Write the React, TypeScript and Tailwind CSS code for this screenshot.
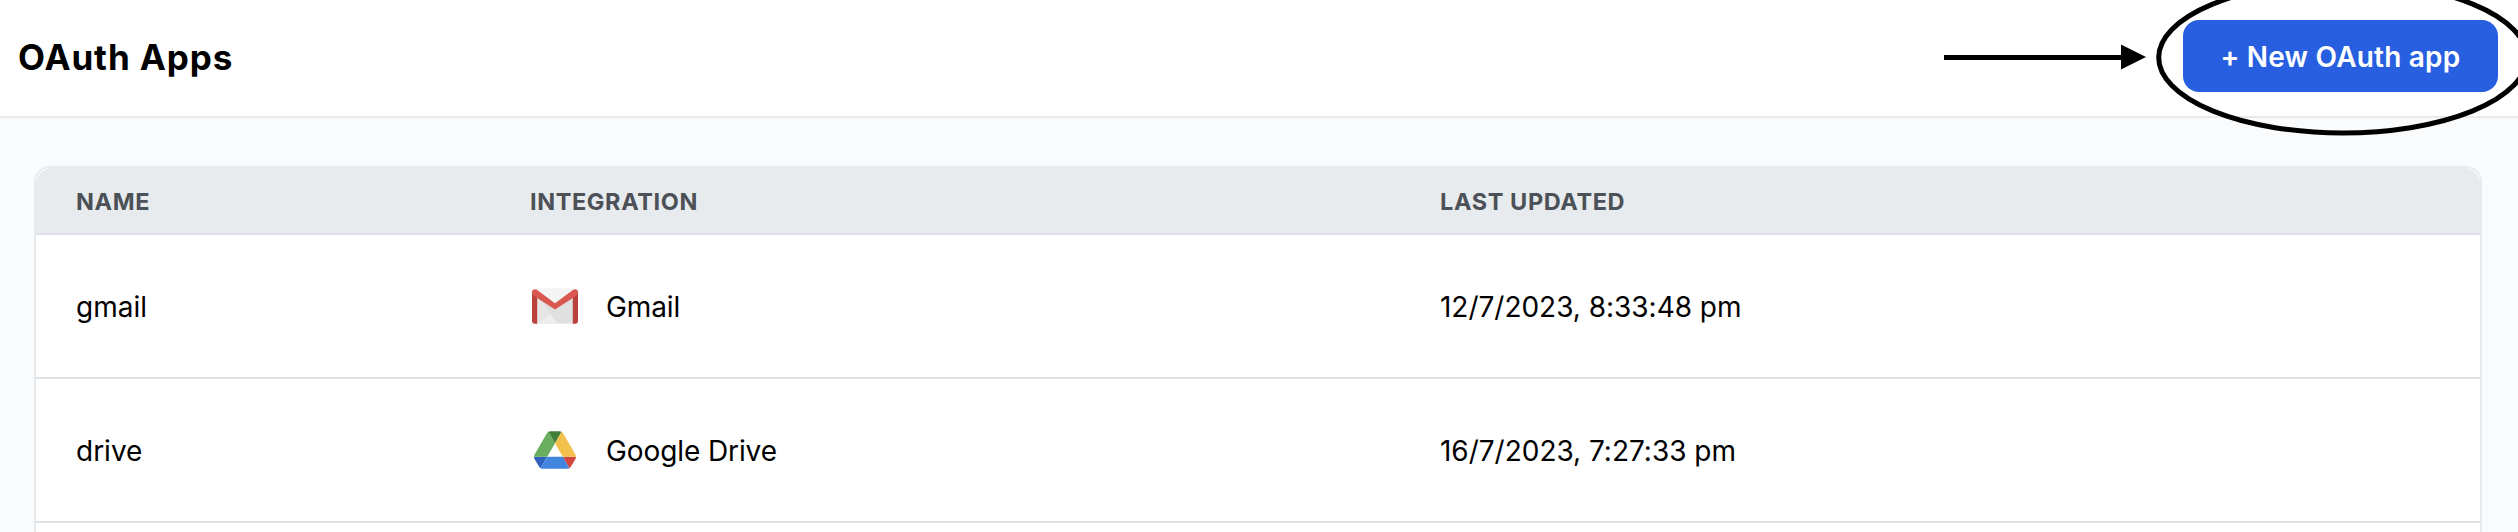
import type { ReactNode } from "react";

function GmailIcon() {
  return (
    <svg width="46" height="36" viewBox="0 0 46 36" className="shrink-0">
      <path d="M3 0.3h40v35.4H3z" fill="#f4f4f4" />
      <path d="M5 7.5 23 20.5 41 7.5v28H5z" fill="#e0e0e0" />
      <path d="M5 7.5 19 25 5 35.5z" fill="#e6e6e6" />
      <path d="M5 35.7 18.5 26 25.5 35.7z" fill="#eeeeee" />
      <path d="M0 4h5.2v31.7H3a3 3 0 0 1-3-3z" fill="#b9423c" />
      <path d="M46 4h-5.2v31.7H43a3 3 0 0 0 3-3z" fill="#b9423c" />
      <path d="M0 4C0 1.2 2.8.4 4.800 1.800L23 15.300 41.200 1.800C43.200.4 46 1.200 46 4c0 1.800-.6 3-2 4L23 21.500 2 8C.6 7 0 5.800 0 4z" fill="#d95850" />
    </svg>
  );
}

function DriveIcon() {
  return (
    <svg width="42" height="38" viewBox="0 0 87.3 78" className="shrink-0">
      <path d="m6.600 66.850 3.850 6.650c.8 1.400 1.950 2.500 3.300 3.300l13.750-23.800h-27.500c0 1.550.4 3.100 1.200 4.500z" fill="#2f63bd" />
      <path d="m43.650 25-13.750-23.800c-1.350.8-2.500 1.900-3.300 3.300l-25.400 44a9.060 9.060 0 0 0-1.200 4.500h27.500z" fill="#68ae5e" />
      <path d="m73.550 76.800c1.350-.8 2.500-1.900 3.300-3.300l1.600-2.750 7.650-13.250c.8-1.400 1.200-2.950 1.200-4.500h-27.500z" fill="#d3483e" />
      <path d="m43.650 25 13.750-23.800c-1.350-.8-2.900-1.200-4.500-1.200h-18.500c-1.600 0-3.150.45-4.500 1.200z" fill="#437f3a" />
      <path d="m59.800 53h-32.300l-13.750 23.800c1.350.8 2.900 1.200 4.500 1.200h50.800c1.600 0 3.150-.45 4.500-1.200z" fill="#4285df" />
      <path d="m73.400 26.500-12.700-22c-.8-1.400-1.950-2.500-3.300-3.300l-13.750 23.800 16.150 28h27.450c0-1.550-.4-3.100-1.200-4.500z" fill="#f2c04c" />
    </svg>
  );
}

type OAuthApp = { name: string; integration: string; icon: ReactNode; updated: string };

const apps: OAuthApp[] = [
  { name: "gmail", integration: "Gmail", icon: <GmailIcon />, updated: "12/7/2023, 8:33:48 pm" },
  { name: "drive", integration: "Google Drive", icon: <DriveIcon />, updated: "16/7/2023, 7:27:33 pm" },
];

export default function App() {
  return (
    <div className="relative flex h-[532px] w-full flex-col overflow-hidden bg-[#fafbfd] font-['Inter',sans-serif] text-black">
      <header className="flex h-[118px] shrink-0 items-center justify-between border-b-2 border-[#e8ebed] bg-white pr-5 pl-[18px]">
        <h1 className="pb-[3px] text-[35px] leading-[48px] font-bold tracking-[0.9px]">OAuth Apps</h1>
        <button className="mb-1 h-[72px] w-[315px] rounded-2xl bg-[#285fe0] pt-[2px] text-[28px] font-semibold tracking-[0.2px] text-white">
          + New OAuth app
        </button>
      </header>

      <main className="flex-1 pt-12 pr-9 pl-[34px]">
        <div className="h-[400px] rounded-t-2xl border-2 border-[#e8ebed] bg-white">
          <div className="grid h-[67px] grid-cols-[454px_910px_1fr] items-center rounded-t-2xl border-b-2 border-[#dee2e6] bg-[#e8ebed] pt-[3px] text-[23.5px] font-bold tracking-[0.6px] text-[#4c5057]">
            <div className="pl-10">NAME</div>
            <div className="pl-10">INTEGRATION</div>
            <div className="pl-10">LAST UPDATED</div>
          </div>
          {apps.map((app) => (
            <div
              key={app.name}
              className="grid h-36 grid-cols-[454px_910px_1fr] items-center border-b-2 border-[#dee2e6] text-[28px]"
            >
              <div className="pt-[2px] pl-10">{app.name}</div>
              <div className="flex items-center pl-10">
                <span className="flex w-[50px] justify-center">{app.icon}</span>
                <span className="pt-[2px] pl-[26px] tracking-[-0.1px]">{app.integration}</span>
              </div>
              <div className="pt-[2px] pl-10 tracking-[-0.02px]">{app.updated}</div>
            </div>
          ))}
        </div>
      </main>

      <svg width="574" height="140" viewBox="0 0 574 140" className="pointer-events-none absolute top-0 right-0">
        <path d="M0 57.500h178" stroke="#000" strokeWidth="5" />
        <path d="M177 44.500 202 57 177 69.500z" fill="#000" />
        <ellipse cx="398.700" cy="57.500" rx="184" ry="75.500" fill="none" stroke="#000" strokeWidth="5" />
      </svg>
    </div>
  );
}
